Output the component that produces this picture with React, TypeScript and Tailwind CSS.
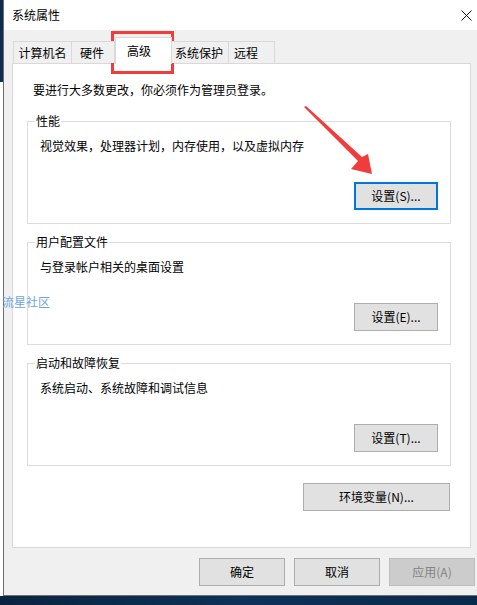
import React from "react";

const font = { fontFamily: '"Noto Sans CJK SC", "Noto Sans", sans-serif' };

function Btn({
  children,
  w = "w-[84px]",
  focused = false,
  disabled = false,
}: {
  children: React.ReactNode;
  w?: string;
  focused?: boolean;
  disabled?: boolean;
}) {
  const base = "h-[28px] flex items-center justify-center text-[12px] leading-[16px] shrink-0";
  if (disabled)
    return <div className={`${base} ${w} bg-[#cccccc] border border-[#bfbfbf] text-[#838383]`}>{children}</div>;
  if (focused)
    return <div className={`${base} ${w} bg-[#e1e1e1] border-2 border-[#0078d7] text-black`}>{children}</div>;
  return <div className={`${base} ${w} bg-[#e1e1e1] border border-[#adadad] text-black`}>{children}</div>;
}

function Group({
  title,
  text,
  btn,
  focused = false,
  mt,
}: {
  title: string;
  text: string;
  btn: string;
  focused?: boolean;
  mt: string;
}) {
  return (
    <div className={`relative ${mt} ml-[14px] w-[424px] h-[103px] border border-[#dcdcdc] flex flex-col pt-[16px] pl-[12px] pr-[12px]`}>
      <div className="absolute -top-[9px] left-[7px] bg-white px-[1px] text-[12px] leading-[16px] text-black">{title}</div>
      <div className="text-[12px] leading-[16px] text-black">{text}</div>
      <div className="mt-auto mb-[13px] self-end">
        <Btn focused={focused}>{btn}</Btn>
      </div>
    </div>
  );
}

export default function App() {
  return (
    <div className="relative w-[477px] h-[605px] overflow-hidden bg-white flex flex-col" style={font}>
      <div className="flex h-[596px]">
        {/* desktop strip */}
        <div className="w-[3px] h-full flex flex-col overflow-hidden">
          <div className="h-[82px] bg-[#0d2c52]" />
          <div className="flex-1 bg-white relative" />
        </div>
        {/* window */}
        <div className="flex-1 flex flex-col border-l border-b border-[#6f6f6f]">
          <div className="h-[30px] bg-white flex items-center justify-between pl-[8px] pr-[5px]">
            <span className="text-[12px] leading-[16px] text-black">系统属性</span>
            <svg width="11" height="11" viewBox="0 0 11 11" className="mr-[0px]">
              <path d="M0.5 0.5 L10.5 10.5 M10.5 0.5 L0.5 10.5" stroke="#111" strokeWidth="1" />
            </svg>
          </div>
          <div className="flex-1 bg-[#f0f0f0] flex flex-col pt-[7px]">
            {/* tabs */}
            <div className="h-[26px] flex items-end pl-[9px] relative z-10">
              <div className="w-[59px] h-[22px] border border-b-0 border-[#d9d9d9] bg-[#f0f0f0] flex items-center justify-center text-[12px] leading-[16px] text-black">计算机名</div>
              <div className="w-[43px] h-[22px] border border-l-0 border-b-0 border-[#d9d9d9] bg-[#f0f0f0] flex items-center pl-[8px] text-[12px] leading-[16px] text-black">硬件</div>
              <div className="w-[57px] h-[27px] -mb-px border border-b-0 border-[#d9d9d9] bg-white flex items-start pt-[5px] pl-[11px] text-[12px] leading-[16px] text-black">高级</div>
              <div className="w-[57px] h-[22px] border border-l-0 border-b-0 border-[#d9d9d9] bg-[#f0f0f0] flex items-center pl-[3px] text-[12px] leading-[16px] text-black">系统保护</div>
              <div className="w-[46px] h-[22px] border border-l-0 border-b-0 border-[#d9d9d9] bg-[#f0f0f0] flex items-center pl-[5px] text-[12px] leading-[16px] text-black">远程</div>
            </div>
            {/* panel */}
            <div className="ml-[8px] mr-[6px] h-[485px] bg-white border border-[#d9d9d9] flex flex-col">
              <div className="pt-[18px] pl-[20px] text-[12px] leading-[16px] text-black">要进行大多数更改，你必须作为管理员登录。</div>
              <Group mt="mt-[23px]" title="性能" text="视觉效果，处理器计划，内存使用，以及虚拟内存" btn="设置(S)..." focused />
              <Group mt="mt-[18px]" title="用户配置文件" text="与登录帐户相关的桌面设置" btn="设置(E)..." />
              <Group mt="mt-[18px]" title="启动和故障恢复" text="系统启动、系统故障和调试信息" btn="设置(T)..." />
              <div className="mt-[17px] ml-[290px]">
                <Btn w="w-[147px]">环境变量(N)...</Btn>
              </div>
            </div>
            {/* bottom buttons */}
            <div className="mt-[10px] flex justify-end gap-[9px] pr-[2px]">
              <Btn w="w-[86px]">确定</Btn>
              <Btn w="w-[86px]">取消</Btn>
              <Btn w="w-[86px]" disabled>应用(A)</Btn>
            </div>
          </div>
        </div>
      </div>
      {/* taskbar */}
      <div className="flex-1 bg-gradient-to-r from-[#0a2440] via-[#0d3158] to-[#0a2a4c]" />

      {/* red highlight box */}
      <div className="absolute left-[111px] top-[31px] w-[63px] h-[43px] border-[3px] border-[#f23b3b]" />

      {/* red arrow */}
      <svg className="absolute left-0 top-0" width="477" height="605" viewBox="0 0 477 605">
        <polygon points="304,107 306,106 362,157 368,154 372,174 351,169 358,161" fill="#f03c3c" />
      </svg>

      {/* watermark */}
      <div className="absolute left-[2px] top-[294px] text-[12px] leading-[16px] text-[#6ea6df]">流星社区</div>
    </div>
  );
}
